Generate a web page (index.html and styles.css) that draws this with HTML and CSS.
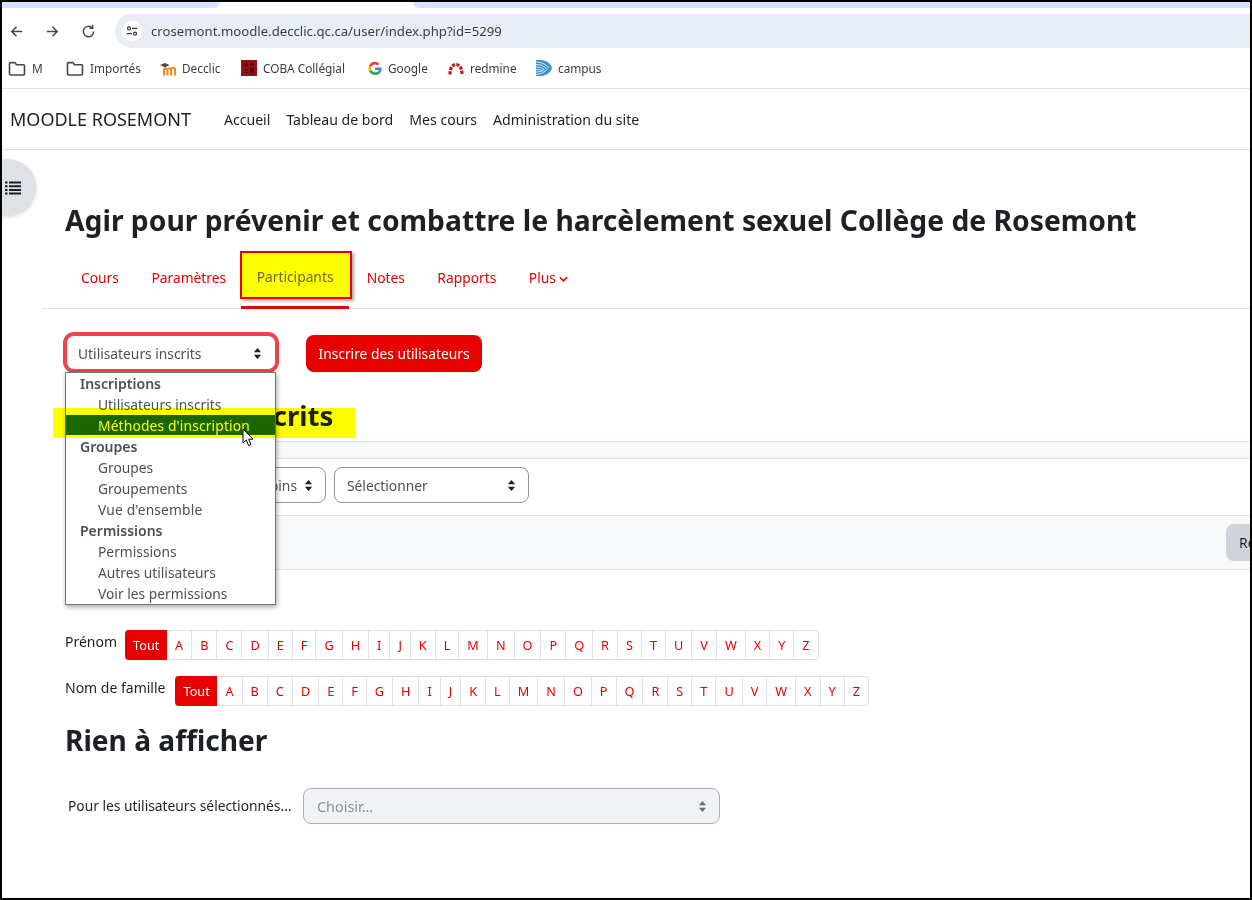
FILE: index.html
```html
<!DOCTYPE html>
<html lang="fr">
<head>
<meta charset="utf-8">
<title>Participants</title>
<link rel="stylesheet" href="styles.css">
</head>
<body>
<div class="frame">
  <div class="tabstrip"><div class="tab-left"></div><div class="tab-active"></div><div class="tab-right"></div></div>

  <div class="toolbar">
    <svg class="tb-icon" viewBox="0 0 16 16"><path d="M14 8H3M8 3L3 8l5 5" /></svg>
    <svg class="tb-icon" viewBox="0 0 16 16"><path d="M2 8h11M8 3l5 5-5 5" /></svg>
    <svg class="tb-icon" viewBox="0 0 16 16"><path d="M13.5 8A5.5 5.5 0 1 1 11.8 4M12.5 1v3.6H9" /></svg>
    <div class="omnibox">
      <span class="site-chip"><svg viewBox="0 0 16 16"><circle cx="4" cy="4.5" r="2"/><path d="M8 4.5h7M1 11.5h7"/><circle cx="12" cy="11.5" r="2"/></svg></span>
      <span class="url">crosemont.moodle.decclic.qc.ca/user/index.php?id=5299</span>
    </div>
  </div>

  <div class="bookmarks">
    <span class="bm bm-m"><svg class="bm-icon folder" viewBox="0 0 16 14"><path d="M1 2.500a1 1 0 0 1 1-1h4l1.500 2H14a1 1 0 0 1 1 1V12a1 1 0 0 1-1 1H2a1 1 0 0 1-1-1z"/></svg>M</span>
    <span class="bm bm-imp"><svg class="bm-icon folder" viewBox="0 0 16 14"><path d="M1 2.500a1 1 0 0 1 1-1h4l1.500 2H14a1 1 0 0 1 1 1V12a1 1 0 0 1-1 1H2a1 1 0 0 1-1-1z"/></svg>Importés</span>
    <span class="bm bm-dec"><svg class="bm-icon" viewBox="0 0 16 14"><path d="M4 14V8.500c0-2 3-2 3.500 0V14M7.500 8.500c.3-2.500 3-2.500 3.500 0V14M11 8.500c.3-3 4-3 4 0V14" fill="none" stroke="#f28b1c" stroke-width="2"/><path d="M0 3.500L5 1.500l4.500 2L5 6z" fill="#4a4a4a"/></svg>Decclic</span>
    <span class="bm bm-coba"><svg class="bm-icon coba" viewBox="0 0 16 16"><rect width="16" height="16" fill="#990d16"/><path d="M3 2.500h4v4H3zM9 2.500h4v3H9zM3 9h4v1.500H3zM9 7.500h4v5H9zM3 12h4v1H3z" fill="#5a0a0e"/></svg>COBA Collégial</span>
    <span class="bm bm-goo"><svg class="bm-icon" viewBox="0 0 16 16"><path d="M15 8.200c0-.5 0-1-.1-1.400H8v2.700h4a3.400 3.400 0 0 1-1.500 2.200l2.300 1.800C14.200 12.200 15 10.400 15 8.200z" fill="#4285f4"/><path d="M8 15c2 0 3.600-.7 4.800-1.800l-2.300-1.800c-.6.400-1.500.700-2.500.700-1.900 0-3.500-1.300-4.100-3L1.500 10.900C2.700 13.300 5.100 15 8 15z" fill="#34a853"/><path d="M3.900 9.100a4.200 4.200 0 0 1 0-2.600L1.500 4.700a7 7 0 0 0 0 6.200z" fill="#fbbc05"/><path d="M8 3.800c1 0 2 .4 2.700 1l2-2A7 7 0 0 0 1.500 4.700l2.400 1.800c.6-1.600 2.200-2.700 4.100-2.700z" fill="#ea4335"/></svg>Google</span>
    <span class="bm bm-red"><svg class="bm-icon" viewBox="0 0 16 14"><path d="M2 13C2 6.500 4.500 3 8 3s6 3.500 6 10" fill="none" stroke="#c4161c" stroke-width="3.200" stroke-dasharray="3.200 1.200"/></svg>redmine</span>
    <span class="bm"><svg class="bm-icon campus" viewBox="0 0 16 18"><path d="M0 1h5c6 .5 10 4 11 8-1 4-5 7.500-11 8H0z" fill="#3d8fca"/><path d="M0 3c6 0 10 2.500 13 6M0 5.500c5 0 8 1.500 10.500 4M0 8c3.500 0 6 .8 8 2.500M0 10.500c2.500 0 4.500.3 6 1.500M0 13c3 0 6-.7 8.500-2.500M0 15.500c5-.3 9-2.500 11.500-5.500" stroke="#fff" fill="none" stroke-width=".8"/></svg>campus</span>
  </div>

  <nav class="navbar">
    <span class="brand">MOODLE ROSEMONT</span>
    <span class="nav-link">Accueil</span>
    <span class="nav-link">Tableau de bord</span>
    <span class="nav-link">Mes cours</span>
    <span class="nav-link">Administration du site</span>
  </nav>

  <main class="page">
    <button class="drawer-toggle" type="button" aria-label="Index">
      <svg viewBox="0 0 16 14"><path d="M0 1.500h2.500M0 5.300h2.500M0 9h2.500M0 12.500h2.500M4 1.500h12M4 5.300h12M4 9h12M4 12.500h12"/></svg>
    </button>

    <h1 class="title">Agir pour prévenir et combattre le harcèlement sexuel Collège de Rosemont</h1>

    <div class="tabs">
      <span class="tab">Cours</span>
      <span class="tab">Paramètres</span>
      <span class="tab tab-current"><span class="tab-mark">Participants</span></span>
      <span class="tab">Notes</span>
      <span class="tab">Rapports</span>
      <span class="tab">Plus <svg class="caret" viewBox="0 0 10 7"><path d="M1 1l4 4 4-4"/></svg></span>
    </div>

    <div class="actions">
      <div class="select select-main">
        <span>Utilisateurs inscrits</span>
        <svg class="updown" viewBox="0 0 10 12"><path d="M5 0l4 4.500H1zM5 12L1 7.500h8z"/></svg>
      </div>
      <button class="btn-primary" type="button">Inscrire des utilisateurs</button>
    </div>

    <h2 class="section"><span>Utilisateurs inscrits</span></h2>

    <div class="strip"></div>

    <div class="filters">
      <div class="select select-match"><span>Au moins</span><svg class="updown" viewBox="0 0 10 12"><path d="M5 0l4 4.500H1zM5 12L1 7.500h8z"/></svg></div>
      <div class="select select-pick"><span>Sélectionner</span><svg class="updown" viewBox="0 0 10 12"><path d="M5 0l4 4.500H1zM5 12L1 7.500h8z"/></svg></div>
    </div>

    <div class="filter-bar"><span class="reset">Réinitialiser</span></div>

    <div class="initials initials-first">
      <span class="init-label">Prénom</span>
      <div class="letters">
        <span class="lt lt-all">Tout</span><span class="lt">A</span><span class="lt">B</span><span class="lt">C</span><span class="lt">D</span><span class="lt">E</span><span class="lt">F</span><span class="lt">G</span><span class="lt">H</span><span class="lt">I</span><span class="lt">J</span><span class="lt">K</span><span class="lt">L</span><span class="lt">M</span><span class="lt">N</span><span class="lt">O</span><span class="lt">P</span><span class="lt">Q</span><span class="lt">R</span><span class="lt">S</span><span class="lt">T</span><span class="lt">U</span><span class="lt">V</span><span class="lt">W</span><span class="lt">X</span><span class="lt">Y</span><span class="lt">Z</span>
      </div>
    </div>
    <div class="initials">
      <span class="init-label init-label-wide">Nom de famille</span>
      <div class="letters">
        <span class="lt lt-all">Tout</span><span class="lt">A</span><span class="lt">B</span><span class="lt">C</span><span class="lt">D</span><span class="lt">E</span><span class="lt">F</span><span class="lt">G</span><span class="lt">H</span><span class="lt">I</span><span class="lt">J</span><span class="lt">K</span><span class="lt">L</span><span class="lt">M</span><span class="lt">N</span><span class="lt">O</span><span class="lt">P</span><span class="lt">Q</span><span class="lt">R</span><span class="lt">S</span><span class="lt">T</span><span class="lt">U</span><span class="lt">V</span><span class="lt">W</span><span class="lt">X</span><span class="lt">Y</span><span class="lt">Z</span>
      </div>
    </div>

    <h2 class="nothing">Rien à afficher</h2>

    <div class="bulk">
      <span class="bulk-label">Pour les utilisateurs sélectionnés...</span>
      <div class="select select-bulk"><span>Choisir...</span><svg class="updown" viewBox="0 0 10 12"><path d="M5 0l4 4.500H1zM5 12L1 7.500h8z"/></svg></div>
    </div>

    <div class="menu">
      <div class="m-group">Inscriptions</div>
      <div class="m-item">Utilisateurs inscrits</div>
      <div class="m-item m-active m-wide">Méthodes d'inscription</div>
      <div class="m-group">Groupes</div>
      <div class="m-item">Groupes</div>
      <div class="m-item">Groupements</div>
      <div class="m-item m-wide">Vue d'ensemble</div>
      <div class="m-group">Permissions</div>
      <div class="m-item">Permissions</div>
      <div class="m-item">Autres utilisateurs</div>
      <div class="m-item">Voir les permissions</div>
    </div>

    <div class="highlighter"></div>

    <svg class="cursor" viewBox="0 0 13 19"><path d="M1 1v14l3.300-3 2.300 5.500 2.400-1-2.300-5.300H11z" fill="#fff" stroke="#000" stroke-width="1"/></svg>
  </main>
</div>
</body>
</html>
```

FILE: styles.css
```css
* { box-sizing: border-box; }
html, body { margin: 0; padding: 0; background: #fff; }
body { font-family: "Noto Sans", "Open Sans", "Liberation Sans", sans-serif; color: #1d2125; }

.frame {
  width: 1252px;
  height: 900px;
  border: 2px solid #000;
  overflow: hidden;
  display: flex;
  flex-direction: column;
  background: #fff;
}

/* browser chrome */
.tabstrip { height: 6px; display: flex; flex: none; }
.tab-left { width: 218px; background: #d3e3fd; border-radius: 0 0 8px 0; }
.tab-active { width: 193px; background: #fff; }
.tab-right { flex: 1; background: #d3e3fd; border-radius: 0 0 0 8px; }

.toolbar { height: 34px; margin-top: 6px; display: flex; align-items: center; flex: none; }
.tb-icon { width: 15px; height: 15px; margin-left: 7px; margin-right: 14px; flex: none; fill: none; stroke: #474747; stroke-width: 1.600; }
.omnibox {
  flex: 1;
  height: 34px;
  margin-left: 5px;
  background: #e9eef6;
  border-radius: 17px 0 0 17px;
  display: flex;
  align-items: center;
  padding-left: 7px;
}
.site-chip { width: 20px; height: 20px; border-radius: 50%; background: #fff; display: flex; align-items: center; justify-content: center; flex: none; }
.site-chip svg { width: 12px; height: 12px; fill: none; stroke: #333; stroke-width: 1.500; }
.url { margin-left: 9px; font-size: 13.180px; color: #3c4043; }

.bookmarks {
  height: 41px;
  border-bottom: 1px solid #e3e3e3;
  display: flex;
  align-items: center;
  padding-left: 6px;
  font-size: 11.800px;
  color: #3c3c3c;
  flex: none;
}
.bm { display: inline-flex; align-items: center; flex: none; }
.bm-icon { width: 16px; height: 15px; margin-right: 6px; flex: none; }
.bm-m { width: 58px; }
.bm-imp { width: 94px; }
.bm-dec { width: 81px; }
.bm-coba { width: 126px; }
.bm-goo { width: 81px; }
.bm-goo .bm-icon { margin-right: 5px; }
.bm-red { width: 88px; }
.folder { width: 18px; fill: none; stroke: #474747; stroke-width: 1.500; }
.coba { height: 16px; }
.campus { height: 18px; }

.navbar {
  height: 61px;
  border-bottom: 1px solid #dee2e6;
  display: flex;
  align-items: center;
  padding-left: 8px;
  flex: none;
}
.brand { font-size: 18px; margin-right: 33px; color: #1d2125; }
.nav-link { font-size: 14.100px; margin-right: 16px; color: #1d2125; }

/* page */
.page { position: relative; flex: 1; padding-top: 52px; }
.drawer-toggle {
  position: absolute;
  left: -24px;
  top: 9px;
  width: 58px;
  height: 57px;
  border-radius: 50%;
  border: 0;
  background: #dee2e6;
  box-shadow: 0 1px 4px rgba(0,0,0,.15);
  padding: 0 0 0 27px;
  display: flex;
  align-items: center;
}
.drawer-toggle svg { width: 16px; height: 14px; fill: none; stroke: #1d2125; stroke-width: 2; }

.title { margin: 0 0 0 63px; font-size: 28.280px; line-height: 36px; font-weight: 700; white-space: nowrap; }

.tabs {
  margin: 16px 0 0 40px;
  height: 55px;
  padding-bottom: 8px;
  border-bottom: 1px solid #dee2e6;
  display: flex;
  align-items: center;
  padding-left: 39px;
  font-size: 13.800px;
  color: #e60000;
  white-space: nowrap;
}
.tab { margin-right: 32.500px; }
.tab-current {
  position: relative;
  margin: 0 15px 0 -19px;
  align-self: stretch;
}
.tab-current::after {
  content: "";
  position: absolute;
  left: 1px;
  right: 3px;
  bottom: -9px;
  height: 3px;
  background: #e60000;
}
.tab-mark {
  display: block;
  height: 48px;
  margin-top: -3px;
  line-height: 48px;
  padding: 0 15px;
  background: #ff0;
  color: #6b6b1a;
  border: 2px solid #e60000;
  box-shadow: 2px 2px 3px rgba(0,0,0,.35);
  width: 112px;
}
.caret { width: 9px; height: 7px; fill: none; stroke: #e60000; stroke-width: 1.800; }

.actions { margin: 26px 0 0 64px; display: flex; align-items: flex-start; gap: 30px; }
.select {
  height: 36px;
  border: 1px solid #8f959e;
  border-radius: 8px;
  background: #fff;
  display: flex;
  align-items: center;
  justify-content: space-between;
  padding: 0 12px;
  font-size: 13.800px;
  color: #495057;
  flex: none;
}
.updown { width: 9px; height: 11px; fill: #1d2125; flex: none; }
.select-main { width: 210px; height: 35px; padding: 2px 13px 0 11px; box-shadow: 0 0 0 3px #f0424c; border-color: #f0424c; }
.btn-primary {
  height: 37px;
  width: 176px;
  border: 0;
  border-radius: 8px;
  background: #e60000;
  color: #fff;
  font-family: inherit;
  font-size: 13.800px;
}

.section { margin: 37px 0 0 51px; width: 303px; height: 30px; font-size: 27.600px; line-height: 12px; font-weight: 700; padding-left: 12px; white-space: nowrap; }
.strip { height: 18px; margin: 2px 0 0 64px; background: #f8f9fa; border-top: 1px solid #dee2e6; border-bottom: 1px solid #dee2e6; }

.filters { margin: 8px 0 0 100px; display: flex; gap: 8px; }
.select-match { width: 224px; justify-content: flex-end; gap: 7px; }
.select-pick { width: 195px; }

.filter-bar {
  height: 55px;
  margin: 12px 0 0 64px;
  background: #f8f9fa;
  border-top: 1px solid #dee2e6;
  border-bottom: 1px solid #dee2e6;
  display: flex;
  align-items: center;
  justify-content: flex-end;
  overflow: hidden;
}
.reset { flex: none; width: 24px; height: 37px; background: #ced4da; border-radius: 8px 0 0 8px; font-size: 14px; line-height: 37px; padding-left: 13px; white-space: nowrap; overflow: hidden; }

.initials { display: flex; align-items: flex-start; margin: 16px 0 0 63px; font-size: 14px; }
.initials-first { margin-top: 60px; }
.init-label { margin-right: 8px; line-height: 23px; white-space: nowrap; }
.init-label-wide { margin-right: 10px; }
.letters { display: flex; font-size: 12.700px; border: 1px solid #dee2e6; border-left: 0; border-radius: 0 4px 4px 0; height: 30px; }
.lt { padding: 0 8px; line-height: 28px; color: #e60000; border-right: 1px solid #dee2e6; }
.lt:last-child { border-right: 0; }
.lt-all { background: #e60000; color: #fff; border-radius: 4px 0 0 4px; margin: -1px 0; line-height: 30px; border: 0; padding: 0 8px; height: 30px; flex: none; width: 42px; text-align: center; }

.nothing { margin: 15px 0 0 63px; font-size: 28.100px; line-height: 38px; font-weight: 700; }

.bulk { margin: 29px 0 0 66px; display: flex; align-items: center; font-size: 13.800px; }
.bulk-label { width: 235px; white-space: nowrap; padding-bottom: 2px; }
.select-bulk { width: 417px; background: #f0f2f5; border-color: #aab0b8; color: #8a9099; font-size: 14.400px; padding-left: 13px; }
.select-bulk .updown { fill: #6b7177; }

/* open dropdown */
.menu {
  position: absolute;
  left: 63px;
  top: 222px;
  width: 211px;
  height: 233px;
  background: #fff;
  border: 1px solid #767676;
  box-shadow: 1px 2px 5px rgba(0,0,0,.35);
  font-size: 13.800px;
  line-height: 21px;
  color: #495057;
}
.m-group { padding-left: 14px; font-weight: 600; font-size: 14px; }
.m-item { padding-left: 32px; white-space: nowrap; }
.m-wide { letter-spacing: .15px; }
.m-active { background: #1a6600; color: #ff0; height: 20px; margin-bottom: 1px; line-height: 21px; }

/* yellow marker stroke laid over the page and the open menu */
.highlighter {
  position: absolute;
  left: 51px;
  top: 258px;
  width: 303px;
  height: 30px;
  background: #ff0;
  mix-blend-mode: multiply;
  pointer-events: none;
}
.cursor { position: absolute; left: 240px; top: 278px; width: 13px; height: 19px; }
```
